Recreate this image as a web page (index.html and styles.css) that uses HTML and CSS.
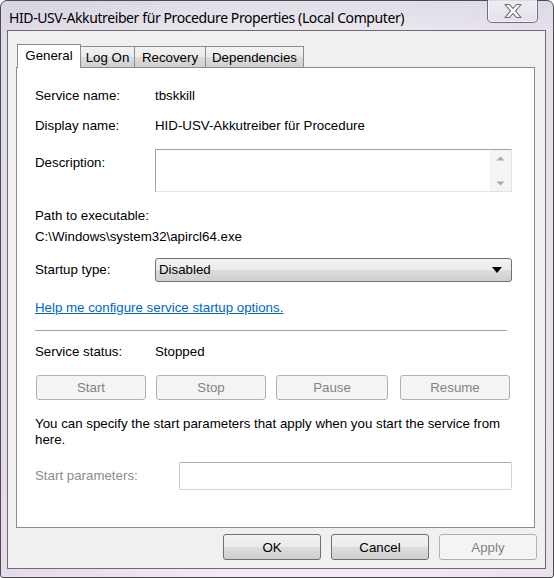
FILE: index.html
```html
<!DOCTYPE html>
<html>
<head>
<meta charset="utf-8">
<link rel="stylesheet" href="styles.css">
</head>
<body>
<div class="window">
  <div class="titlebar">
    <span class="title">HID-USV-Akkutreiber für Procedure Properties (Local Computer)</span>
    <div class="close">
      <svg width="22" height="16" viewBox="0 0 22 16"><path d="M3 1.5 H7.5 L11 5.5 L14.5 1.5 H19 L13.5 8 L19 14.5 H14.5 L11 10.5 L7.5 14.5 H3 L8.5 8 Z" fill="#fafafa" stroke="#6a6a6a" stroke-width="1.1" stroke-linejoin="round"/></svg>
    </div>
  </div>
  <div class="client">
    <div class="tabs">
      <div class="tab selected t-general">General</div>
      <div class="tab t-logon">Log On</div>
      <div class="tab t-recovery">Recovery</div>
      <div class="tab t-deps">Dependencies</div>
    </div>
    <div class="panel">
      <div class="row r-name"><span class="label">Service name:</span><span>tbskkill</span></div>
      <div class="row r-display"><span class="label">Display name:</span><span>HID-USV-Akkutreiber für Procedure</span></div>
      <div class="row r-desc">
        <span class="label desc-label">Description:</span>
        <div class="descbox">
          <div class="desctext"></div>
          <div class="vscroll">
            <svg width="9" height="5" viewBox="0 0 9 5"><path d="M0.5 4.5 L4.5 0.5 L8.5 4.5 Z" fill="#a8a8a8"/></svg>
            <svg width="9" height="5" viewBox="0 0 9 5"><path d="M0.5 0.5 L4.5 4.5 L8.5 0.5 Z" fill="#a8a8a8"/></svg>
          </div>
        </div>
      </div>
      <div class="path-label">Path to executable:</div>
      <div class="path">C:\Windows\system32\apircl64.exe</div>
      <div class="row r-startup">
        <span class="label">Startup type:</span>
        <div class="combo"><span>Disabled</span>
          <svg width="10" height="6" viewBox="0 0 10 6"><path d="M0 0 H10 L5 6 Z" fill="#000"/></svg>
        </div>
      </div>
      <a class="link" href="#">Help me configure service startup options.</a>
      <div class="sep"></div>
      <div class="row r-status"><span class="label">Service status:</span><span>Stopped</span></div>
      <div class="ctrl-buttons">
        <div class="btn disabled">Start</div>
        <div class="btn disabled">Stop</div>
        <div class="btn disabled">Pause</div>
        <div class="btn disabled">Resume</div>
      </div>
      <p class="note">You can specify the start parameters that apply when you start the service from here.</p>
      <div class="row r-params">
        <span class="label param-label">Start parameters:</span>
        <div class="paraminput"></div>
      </div>
    </div>
    <div class="footer">
      <div class="btn dlg">OK</div>
      <div class="btn dlg">Cancel</div>
      <div class="btn dlg disabled">Apply</div>
    </div>
  </div>
</div>
</body>
</html>
```

FILE: styles.css
```css
html, body {
  margin: 0;
  padding: 0;
}
body {
  width: 554px;
  height: 578px;
  background: #ffffff;
  font-family: "Liberation Sans", Arial, sans-serif;
  font-size: 13.3px;
  color: #000;
  overflow: hidden;
}
.window {
  box-sizing: border-box;
  width: 554px;
  height: 578px;
  border: 1px solid #4d4d4d;
  border-radius: 7px 7px 3px 3px;
  background:
    linear-gradient(to right, rgba(200,185,215,0.3), rgba(255,255,255,0) 40%, rgba(255,255,255,0) 70%, rgba(215,200,225,0.25)),
    linear-gradient(to bottom, #dedfe7 0px, #ebe7ef 30px, #f1e9f3 100%);
  padding: 0 7px 8px 6px;
  display: flex;
  flex-direction: column;
}
.titlebar {
  height: 29px;
  position: relative;
  display: flex;
  align-items: center;
}
.title {
  font-family: "Noto Sans", "Open Sans", sans-serif;
  font-size: 14px;
  color: #000;
  margin-left: 2px;
  margin-top: 4px;
  letter-spacing: -0.4px;
}
.close {
  position: absolute;
  right: 8px;
  top: -1px;
  box-sizing: border-box;
  width: 51px;
  height: 23px;
  border: 1px solid rgba(70,70,80,0.75);
  border-top: none;
  border-radius: 0 0 5px 5px;
  background: linear-gradient(to bottom, rgba(255,255,255,0.5), rgba(230,225,235,0.5));
  box-shadow: inset 0 0 0 1px rgba(255,255,255,0.6);
  display: flex;
  align-items: center;
  justify-content: center;
}
.client {
  flex: 1;
  border: 1px solid #6c6c6c;
  background: #f0f0f0;
  display: flex;
  flex-direction: column;
}
.tabs {
  display: flex;
  align-items: flex-end;
  height: 23px;
  margin-top: 13px;
  margin-left: 9px;
  position: relative;
  z-index: 2;
}
.tab {
  box-sizing: border-box;
  height: 21px;
  border: 1px solid #898c95;
  border-bottom: none;
  background: linear-gradient(to bottom, #f2f2f2 0%, #ebebeb 50%, #dddddd 51%, #cfcfcf 100%);
  text-align: center;
  line-height: 21px;
  margin-left: -1px;
}
.tab.selected {
  height: 24px;
  margin-bottom: -1px;
  background: #ffffff;
  line-height: 21px;
  margin-left: 0;
}
.t-general { width: 64px; }
.t-logon { width: 55px; }
.t-recovery { width: 72px; }
.t-deps { width: 99px; }
.panel {
  box-sizing: border-box;
  margin-left: 8px;
  width: 519px;
  height: 461px;
  border: 1px solid #898c95;
  background: #ffffff;
  padding: 20px 22px 0 18px;
  display: flex;
  flex-direction: column;
  position: relative;
  z-index: 1;
}
.row {
  display: flex;
  align-items: center;
  line-height: 16px;
}
.label {
  width: 120px;
  flex: none;
}
.r-display { margin-top: 14px; }
.r-desc {
  margin-top: 15px;
  align-items: flex-start;
}
.desc-label { margin-top: 6px; }
.descbox {
  box-sizing: border-box;
  width: 357px;
  height: 43px;
  border: 1px solid;
  border-color: #a3a3a3 #e2e3ea #e2e3ea #a3a3a3;
  display: flex;
}
.desctext { flex: 1; }
.vscroll {
  width: 21px;
  background: #f4f4f4;
  display: flex;
  flex-direction: column;
  align-items: center;
  justify-content: space-between;
  padding: 6px 0 5px;
}
.path-label {
  margin-top: 16px;
  line-height: 16px;
}
.path {
  margin-top: 5px;
  line-height: 16px;
}
.r-startup { margin-top: 13px; }
.combo {
  box-sizing: border-box;
  width: 357px;
  height: 24px;
  border: 1px solid #707070;
  border-radius: 3px;
  background: linear-gradient(to bottom, #f2f2f2 0%, #ebebeb 50%, #dddddd 51%, #cfcfcf 100%);
  display: flex;
  align-items: center;
  justify-content: space-between;
  padding: 0 9px 0 3px;
}
.link {
  margin-top: 18px;
  line-height: 16px;
  color: #0066cc;
  text-decoration: underline;
  align-self: flex-start;
}
.sep {
  margin-top: 14px;
  width: 472px;
  height: 1px;
  background: #a0a0a0;
}
.r-status { margin-top: 13px; }
.ctrl-buttons {
  margin-top: 15px;
  margin-left: 1px;
  display: grid;
  grid-template-columns: 110px 110px 112px 112px;
  column-gap: 10px;
  width: 475px;
}
.ctrl-buttons .btn:nth-child(4) { margin-left: 2px; }
.btn {
  box-sizing: border-box;
  height: 25px;
  border: 1px solid #707070;
  border-radius: 3px;
  background: linear-gradient(to bottom, #f2f2f2 0%, #ebebeb 50%, #dddddd 51%, #cfcfcf 100%);
  display: flex;
  align-items: center;
  justify-content: center;
}
.btn.disabled {
  border-color: #adb2b5;
  background: #f4f4f4;
  color: #838383;
}
.note {
  margin: 16px 0 0;
  line-height: 16px;
  width: 477px;
}
.r-params { margin-top: 14px; }
.param-label {
  width: 144px;
  color: #8d8d8d;
}
.paraminput {
  box-sizing: border-box;
  width: 333px;
  height: 28px;
  border: 1px solid;
  border-color: #abadb3 #cfd3da #cfd3da #c6c8cc;
  border-radius: 2px;
  background: #fff;
}
.footer {
  display: flex;
  justify-content: flex-end;
  gap: 10px;
  margin-top: 6px;
  margin-right: 8px;
}
.btn.dlg {
  width: 98px;
  height: 26px;
}
```
